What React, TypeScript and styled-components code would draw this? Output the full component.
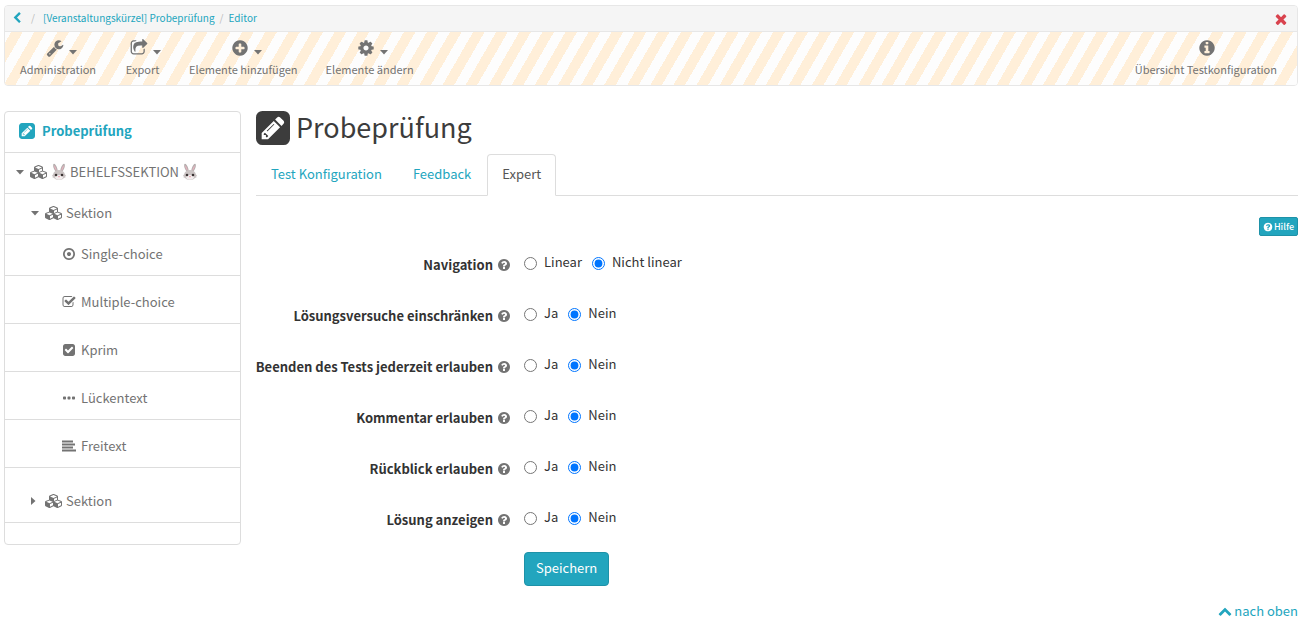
import React from "react";
import styled, { createGlobalStyle, css } from "styled-components";

const teal = "#22a5be";
const grey = "#737373";
const dark = "#333";
const line = "#ddd";
const small = 11;
const base = 13;

const GlobalStyle = createGlobalStyle`
  *, *::before, *::after { box-sizing: border-box; }
  body {
    margin: 0;
    background: #fff;
    color: ${dark};
    font-family: "Noto Sans CJK SC", "Open Sans", sans-serif;
    font-size: ${base}px;
    line-height: 20px;
  }
  a { color: ${teal}; text-decoration: none; }
  button, input { font: inherit; }
`;

/* ---------- icons ---------- */

const Svg = styled.svg<{ $size: number }>`
  height: ${(p) => p.$size}px;
  width: auto;
  flex: none;
  display: block;
  fill: currentColor;
`;

const disc =
  "M1664 896q0 209-103 385.5t-279.5 279.5-385.5 103-385.5-103-279.5-279.5-103-385.5 103-385.5 279.5-279.5 385.5-103 385.5 103 279.5 279.5 103 385.5z";

const shapes = {
  wrench:
    "M448 1472q0-26-19-45t-45-19-45 19-19 45 19 45 45 19 45-19 19-45zm644-420l-682 682q-37 37-90 37-52 0-91-37l-106-108q-38-36-38-90 0-53 38-91l681-681q39 98 114.5 173.5t173.5 114.5zm634-435q0 39-23 106-47 134-164.5 217.5t-258.5 83.5q-185 0-316.5-131.5t-131.5-316.5 131.5-316.5 316.5-131.5q58 0 121.5 16.5t107.5 46.5q16 11 16 28t-16 28l-293 169v224l193 107q5-3 79-48.5t135.5-81 70.5-35.5q15 0 23.5 10t8.5 25z",
  share:
    "M1472 989v259q0 119-84.5 203.5t-203.5 84.5h-832q-119 0-203.5-84.5t-84.5-203.5v-832q0-119 84.5-203.5t203.5-84.5h255q13 0 22.5 9.5t9.5 22.5q0 27-26 32-77 26-133 60-10 4-16 4h-112q-66 0-113 47t-47 113v832q0 66 47 113t113 47h832q66 0 113-47t47-113v-214q0-19 18-29 28-13 54-37 16-16 35-8 21 9 21 29zm237-496l-384 384q-18 19-45 19-12 0-25-5-39-17-39-59v-192h-160q-323 0-438 131-119 137-74 473 3 23-20 34-8 2-12 2-16 0-26-13-10-14-21-31t-39.5-68.5-49.5-99.5-38.5-114-17.5-122q0-49 3.5-91t14-90 28-88 47-81.5 68.5-74 94.5-61.5 124.5-48.5 159.5-30.5 196.5-11h160v-192q0-42 39-59 13-5 25-5 26 0 45 19l384 384q19 19 19 45t-19 45z",
  plus:
    "M1344 960v-128q0-26-19-45t-45-19h-256v-256q0-26-19-45t-45-19h-128q-26 0-45 19t-19 45v256h-256q-26 0-45 19t-19 45v128q0 26 19 45t45 19h256v256q0 26 19 45t45 19h128q26 0 45-19t19-45v-256h256q26 0 45-19t19-45z" +
    disc,
  cog: "M1152 896q0-106-75-181t-181-75-181 75-75 181 75 181 181 75 181-75 75-181zm512-109v222q0 12-8 23t-20 13l-185 28q-19 54-39 91 35 50 107 138 10 12 10 25t-9 23q-27 37-99 108t-94 71q-12 0-26-9l-138-108q-44 23-91 38-16 136-29 186-7 28-36 28h-222q-14 0-24.5-8.5t-11.5-21.5l-28-184q-49-16-90-37l-141 107q-10 9-25 9-14 0-25-11-126-114-165-168-7-10-7-23 0-12 8-23 15-21 51-66.5t54-70.5q-27-50-41-99l-183-27q-13-2-21-12.5t-8-23.5v-222q0-12 8-23t19-13l186-28q14-46 39-92-40-57-107-138-10-12-10-24 0-10 9-23 26-36 98.5-107.5t94.5-71.5q13 0 26 10l138 107q44-23 91-38 16-136 29-186 7-28 36-28h222q14 0 24.5 8.5t11.5 21.5l28 184q49 16 90 37l142-107q9-9 24-9 13 0 25 10 129 119 165 170 7 8 7 22 0 12-8 23-15 21-51 66.5t-54 70.5q26 50 41 98l183 28q13 2 21 12.5t8 23.5z",
  info:
    "M1152 1376v-160q0-14-9-23t-23-9h-96v-512q0-14-9-23t-23-9h-320q-14 0-23 9t-9 23v160q0 14 9 23t23 9h96v320h-96q-14 0-23 9t-9 23v160q0 14 9 23t23 9h448q14 0 23-9t9-23zm-128-896v-160q0-14-9-23t-23-9h-192q-14 0-23 9t-9 23v160q0 14 9 23t23 9h192q14 0 23-9t9-23z" +
    disc,
  question:
    "M1024 1376v-192q0-14-9-23t-23-9h-192q-14 0-23 9t-9 23v192q0 14 9 23t23 9h192q14 0 23-9t9-23zm256-672q0-88-55.5-163t-138.5-116-170-41q-243 0-371 213-15 24 8 42l132 100q7 6 19 6 16 0 25-12 53-68 86-92 34-24 86-24 48 0 85.5 26t37.5 59q0 38-20 61t-68 45q-63 28-115.5 86.5t-52.5 125.5v36q0 14 9 23t23 9h192q14 0 23-9t9-23q0-19 21.5-49.5t54.5-49.5q32-18 49-28.5t46-35 44.5-48 28-60.5 12.5-81z" +
    disc,
  times:
    "M1490 1322q0 40-28 68l-136 136q-28 28-68 28t-68-28l-294-294-294 294q-28 28-68 28t-68-28l-136-136q-28-28-28-68t28-68l294-294-294-294q-28-28-28-68t28-68l136-136q28-28 68-28t68 28l294 294 294-294q28-28 68-28t68 28l136 136q28 28 28 68t-28 68l-294 294 294 294q28 28 28 68z",
  left: "M1427 301l-531 531 531 531q19 19 19 45t-19 45l-166 166q-19 19-45 19t-45-19l-742-742q-19-19-19-45t19-45l742-742q19-19 45-19t45 19l166 166q19 19 19 45t-19 45z",
  up: "M1683 1331l-166 165q-19 19-45 19t-45-19l-531-531-531 531q-19 19-45 19t-45-19l-166-165q-19-19-19-45.5t19-45.5l742-741q19-19 45-19t45 19l742 741q19 19 19 45.5t-19 45.5z",
  dot:
    "M1152 896q0 106-75 181t-181 75-181-75-75-181 75-181 181-75 181 75 75 181zM896 352q-148 0-273 73t-198 198-73 273 73 273 198 198 273 73 273-73 198-198 73-273-73-273-198-198-273-73z" +
    disc,
  checkO:
    "M1472 930v318q0 119-84.5 203.5t-203.5 84.5h-832q-119 0-203.5-84.5t-84.5-203.5v-832q0-119 84.5-203.5t203.5-84.5h832q63 0 117 25 15 7 18 23 3 17-9 29l-49 49q-10 10-23 10-3 0-9-2-23-6-45-6h-832q-66 0-113 47t-47 113v832q0 66 47 113t113 47h832q66 0 113-47t47-113v-254q0-13 9-22l64-64q10-10 23-10 6 0 12 3 20 8 20 29zm231-489l-814 814q-24 24-57 24t-57-24l-430-430q-24-24-24-57t24-57l110-110q24-24 57-24t57 24l263 263 647-647q24-24 57-24t57 24l110 110q24 24 24 57t-24 57z",
  check:
    "M813 1299l614-614q19-19 19-45t-19-45l-102-102q-19-19-45-19t-45 19l-467 467-211-211q-19-19-45-19t-45 19l-102 102q-19 19-19 45t19 45l358 358q19 19 45 19t45-19zm851-883v960q0 119-84.5 203.5t-203.5 84.5h-960q-119 0-203.5-84.5t-84.5-203.5v-960q0-119 84.5-203.5t203.5-84.5h960q119 0 203.5 84.5t84.5 203.5z",
  dots:
    "M224 704h192q96 0 96 96v192q0 96-96 96h-192q-96 0-96-96v-192q0-96 96-96zM800 704h192q96 0 96 96v192q0 96-96 96h-192q-96 0-96-96v-192q0-96 96-96zM1376 704h192q96 0 96 96v192q0 96-96 96h-192q-96 0-96-96v-192q0-96 96-96z",
  lines:
    "M0 192h1408v256H0zM0 576h1664v256H0zM0 960h1408v256H0zM0 1344h1792v256H0z",
};

type IconName = keyof typeof shapes;

const Icon = ({ name, size = 14 }: { name: IconName; size?: number }) => (
  <Svg $size={size} viewBox="0 0 1792 1792" aria-hidden="true">
    <path fillRule="evenodd" d={shapes[name]} />
  </Svg>
);

const Cubes = () => (
  <Svg $size={14} viewBox="0 0 2304 1792" aria-hidden="true">
    <path d="M640 1632l384-192v-314l-384 164v342zm-64-454l404-173-404-173-404 173zm1088 454l384-192v-314l-384 164v342zm-64-454l404-173-404-173-404 173zm-448-293l384-165v-266l-384 164v267zm-64-379l441-189-441-189-441 189zm1088 518v416q0 36-19 67t-52 47l-448 224q-25 14-57 14t-57-14l-448-224q-4-2-7-4-2 2-7 4l-448 224q-25 14-57 14t-57-14l-448-224q-33-16-52-47t-19-67v-416q0-38 21.5-70t56.5-48l434-186v-400q0-38 21.5-70t56.5-48l448-192q23-10 50-10t50 10l448 192q35 16 56.5 48t21.5 70v400l434 186q36 16 57 48t21 70z" />
  </Svg>
);

const PencilSquare = ({ size }: { size: number }) => (
  <Svg $size={size} viewBox="0 -1408 1536 1536" aria-hidden="true">
    <path
      transform="scale(1 -1)"
      fillRule="evenodd"
      d="M404 428l152 -152l-52 -52h-56v96h-96v56zM818 818q14 -13 -3 -30l-291 -291q-17 -17 -30 -3q-14 13 3 30l291 291q17 17 30 3zM544 128l544 544l-288 288l-544 -544v-288h288zM1152 736l92 92q28 28 28 68t-28 68l-152 152q-28 28 -68 28t-68 -28l-92 -92zM1536 1120v-960q0 -119 -84.5 -203.5t-203.5 -84.5h-960q-119 0 -203.5 84.5t-84.5 203.5v960q0 119 84.5 203.5t203.5 84.5h960q119 0 203.5 -84.5t84.5 -203.5z"
    />
  </Svg>
);

const CaretDown = () => (
  <Svg $size={5} viewBox="0 0 8 5" aria-hidden="true">
    <path d="M0 0h8L4 4.5z" />
  </Svg>
);

const CaretRight = () => (
  <Svg $size={8} viewBox="0 0 8 8" aria-hidden="true">
    <path d="M0 0v8l4.500-4z" />
  </Svg>
);

const Rabbit = () => (
  <Svg $size={18} viewBox="0 0 16 18" role="img" aria-label="Hase">
    <path fill="#b5aeae" d="M5 9C2.800 6.500 1.800 3.500 2.200 1.500 2.600.4 3.800.8 4.800 2.300 5.900 4 6.600 6 6.800 8zM11 9c2.200-2.500 3.200-5.500 2.800-7.500-.4-1.100-1.600-.7-2.600.8C10.100 4 9.400 6 9.200 8z" />
    <path fill="#e6b3be" d="M5 7.500C3.700 5.600 3 3.700 3.100 2.300c1 .6 2.100 2.700 2.600 4.900zM11 7.500c1.300-1.900 2-3.800 1.900-5.200-1 .6-2.100 2.700-2.600 4.900z" />
    <path fill="#cbc4c4" d="M8 7c3.200 0 5.300 1.600 5.900 4.300l1.200 1.700-1 .4.300 1.300-1.300.1C12 16.300 10.200 17 8 17s-4-.7-5.100-2.200l-1.300-.1.300-1.300-1-.4 1.200-1.700C2.700 8.600 4.800 7 8 7z" />
    <ellipse cx="8" cy="14.300" rx="3.800" ry="2.400" fill="#f3eeee" />
    <circle cx="5" cy="12" r="1.300" fill="#3a3232" />
    <circle cx="11" cy="12" r="1.300" fill="#3a3232" />
    <path fill="#e0788c" d="M7 13.200h2l-1 1.300z" />
  </Svg>
);

/* ---------- layout ---------- */

const Page = styled.div`
  padding: 5px 3px 16px 4px;
`;

const Header = styled.header`
  border: 1px solid #e7e7e7;
  border-radius: 4px;
  overflow: hidden;
`;

const Breadcrumb = styled.nav`
  display: flex;
  align-items: center;
  height: 26px;
  padding: 0 8px 2px 6px;
  background: #f5f5f5;
  border-bottom: 1px solid #e7e7e7;
  font-size: 10px;
`;

const BackLink = styled.a`
  display: flex;
`;

const Separator = styled.span`
  width: 20px;
  text-align: center;
  color: #bbb;
`;

const CrumbSeparator = styled(Separator)`
  width: 14px;
`;

const CloseButton = styled.button`
  margin: 2px 0 0 auto;
  padding: 0;
  border: 0;
  background: none;
  color: #d9434e;
`;

const Toolbar = styled.div`
  display: flex;
  height: 53px;
  padding: 0 20px 0 15px;
  gap: 28px;
  background: repeating-linear-gradient(-60deg, #fdfdfd 0 10px, #ffefd9 10px 20px);
`;

const Tool = styled.button<{ $end?: boolean }>`
  display: flex;
  flex-direction: column;
  align-items: center;
  padding: 6px 0 0;
  border: 0;
  background: none;
  color: ${grey};
  font-size: ${small}px;
  line-height: 16px;
  white-space: nowrap;
  ${(p) => p.$end && css`margin-left: auto;`}
`;

const ToolIcons = styled.span<{ $menu?: boolean }>`
  display: flex;
  align-items: center;
  gap: 5px;
  height: 20px;
  margin-bottom: 3px;
  padding-left: ${(p) => (p.$menu ? 6 : 2)}px;

  svg + svg { margin-top: 8px; }
`;

const Columns = styled.div`
  display: flex;
  align-items: flex-start;
  gap: 15px;
  margin-top: 25px;
`;

const Sidebar = styled.nav`
  flex: 0 0 237px;
  padding-bottom: 21px;
  border: 1px solid ${line};
  border-radius: 4px;
`;

const TreeRow = styled.a<{ $level: number; $space?: number }>`
  display: flex;
  align-items: center;
  gap: ${(p) => [7, 3, 3, 5][p.$level]}px;
  height: ${(p) => 41 + (p.$space ?? 0)}px;
  padding-top: ${(p) => p.$space ?? 0}px;
  padding-bottom: 2px;
  padding-left: ${(p) => [14, 11, 26, 57][p.$level]}px;
  border-bottom: 1px solid ${line};
  color: ${grey};
  white-space: nowrap;
  ${(p) => p.$level === 0 && css`color: ${teal}; font-weight: 700;`}
`;

const Marker = styled.span`
  display: flex;
  justify-content: center;
  width: 8px;
  margin-right: 3px;
`;

const Main = styled.main`
  flex: 1;
  min-width: 0;
`;

const Title = styled.h1`
  display: flex;
  align-items: flex-start;
  gap: 6px;
  height: 34px;
  margin: 0 0 9px;
  color: #3c3c3c;
  font-size: 27px;
  font-weight: 400;
  line-height: 32px;
`;

const Tabs = styled.nav`
  display: flex;
  gap: 1px;
  border-bottom: 1px solid ${line};
`;

const Tab = styled.a<{ $active?: boolean }>`
  height: 42px;
  margin-bottom: -1px;
  padding: 9px 14px;
  border: 1px solid transparent;
  border-radius: 4px 4px 0 0;
  ${(p) =>
    p.$active &&
    css`
      border-color: ${line};
      border-bottom-color: #fff;
      background: #fff;
      color: #555;
    `}
`;

const HelpRow = styled.div`
  display: flex;
  justify-content: flex-end;
  margin: 21px 0 10px;
`;

const HelpButton = styled.button`
  display: flex;
  align-items: center;
  gap: 1px;
  height: 19px;
  padding: 0 3px;
  border: 1px solid #1e92a8;
  border-radius: 2px;
  background: ${teal};
  color: #fff;
  font-size: 9px;
  font-weight: 500;
`;

const Form = styled.form`
  margin: 0 -15px;
`;

const Field = styled.div`
  display: grid;
  grid-template-columns: 1fr 3fr;
  margin-bottom: 17px;
`;

const FieldLabel = styled.div`
  display: flex;
  align-items: center;
  justify-content: flex-end;
  gap: 4px;
  height: 34px;
  padding-top: 4px;
  font-weight: 700;
  white-space: nowrap;

  svg {
    margin-right: -2px;
    color: ${grey};
  }
`;

const Options = styled.div`
  display: flex;
  gap: 10px;
  height: 32px;
  padding-left: 15px;
`;

const Option = styled.label`
  display: flex;
  align-items: center;
  gap: 7px;
`;

const Radio = styled.input`
  width: 13px;
  height: 13px;
  margin: 2px 0 0;
`;

const Actions = styled.div`
  display: grid;
  grid-template-columns: 1fr 3fr;
`;

const SaveButton = styled.button`
  grid-column: 2;
  justify-self: start;
  height: 34px;
  margin-left: 15px;
  padding: 0 11px 2px;
  border: 1px solid #1e92a8;
  border-radius: 4px;
  background: ${teal};
  color: #fff;
`;

const Footer = styled.footer`
  display: flex;
  justify-content: flex-end;
  margin-top: 15px;
`;

const TopLink = styled.a`
  display: flex;
  align-items: center;
  gap: 2px;
`;

/* ---------- data ---------- */

const tools: { icon: IconName; label: string }[] = [
  { icon: "wrench", label: "Administration" },
  { icon: "share", label: "Export" },
  { icon: "plus", label: "Elemente hinzufügen" },
  { icon: "cog", label: "Elemente ändern" },
];

const questions: { icon: IconName; label: string; space: number }[] = [
  { icon: "dot", label: "Single-choice", space: 0 },
  { icon: "checkO", label: "Multiple-choice", space: 7 },
  { icon: "check", label: "Kprim", space: 7 },
  { icon: "dots", label: "Lückentext", space: 7 },
  { icon: "lines", label: "Freitext", space: 7 },
];

const fields = [
  { id: "navigation", label: "Navigation", options: ["Linear", "Nicht linear"] },
  { id: "attempts", label: "Lösungsversuche einschränken", options: ["Ja", "Nein"] },
  { id: "cancel", label: "Beenden des Tests jederzeit erlauben", options: ["Ja", "Nein"] },
  { id: "comment", label: "Kommentar erlauben", options: ["Ja", "Nein"] },
  { id: "review", label: "Rückblick erlauben", options: ["Ja", "Nein"] },
  { id: "solution", label: "Lösung anzeigen", options: ["Ja", "Nein"] },
];

export default function App() {
  return (
    <>
      <GlobalStyle />
      <Page>
        <Header>
          <Breadcrumb>
            <BackLink href="#" aria-label="Zurück">
              <Icon name="left" size={12} />
            </BackLink>
            <Separator>/</Separator>
            <a href="#">[Veranstaltungskürzel] Probeprüfung</a>
            <CrumbSeparator>/</CrumbSeparator>
            <a href="#">Editor</a>
            <CloseButton type="button" aria-label="Schliessen">
              <Icon name="times" size={16} />
            </CloseButton>
          </Breadcrumb>
          <Toolbar>
            {tools.map((t) => (
              <Tool key={t.label} type="button">
                <ToolIcons $menu>
                  <Icon name={t.icon} size={18} />
                  <CaretDown />
                </ToolIcons>
                {t.label}
              </Tool>
            ))}
            <Tool type="button" $end>
              <ToolIcons>
                <Icon name="info" size={18} />
              </ToolIcons>
              Übersicht Testkonfiguration
            </Tool>
          </Toolbar>
        </Header>

        <Columns>
          <Sidebar>
            <TreeRow href="#" $level={0}>
              <PencilSquare size={16} />
              Probeprüfung
            </TreeRow>
            <TreeRow href="#" $level={1}>
              <Marker><CaretDown /></Marker>
              <Cubes />
              <Rabbit />
              BEHELFSSEKTION
              <Rabbit />
            </TreeRow>
            <TreeRow href="#" $level={2}>
              <Marker><CaretDown /></Marker>
              <Cubes />
              Sektion
            </TreeRow>
            {questions.map((q) => (
              <TreeRow key={q.label} href="#" $level={3} $space={q.space}>
                <Icon name={q.icon} />
                {q.label}
              </TreeRow>
            ))}
            <TreeRow href="#" $level={2} $space={14}>
              <Marker><CaretRight /></Marker>
              <Cubes />
              Sektion
            </TreeRow>
          </Sidebar>

          <Main>
            <Title>
              <PencilSquare size={34} />
              Probeprüfung
            </Title>
            <Tabs>
              <Tab href="#">Test Konfiguration</Tab>
              <Tab href="#">Feedback</Tab>
              <Tab href="#" $active>Expert</Tab>
            </Tabs>
            <HelpRow>
              <HelpButton type="button">
                <Icon name="question" size={10} />
                Hilfe
              </HelpButton>
            </HelpRow>
            <Form onSubmit={(e) => e.preventDefault()}>
              {fields.map((f) => (
                <Field key={f.id} role="radiogroup" aria-labelledby={f.id}>
                  <FieldLabel>
                    <span id={f.id}>{f.label}</span>
                    <Icon name="question" />
                  </FieldLabel>
                  <Options>
                    {f.options.map((o, i) => (
                      <Option key={o}>
                        <Radio type="radio" name={f.id} defaultChecked={i === 1} />
                        {o}
                      </Option>
                    ))}
                  </Options>
                </Field>
              ))}
              <Actions>
                <SaveButton type="submit">Speichern</SaveButton>
              </Actions>
            </Form>
            <Footer>
              <TopLink href="#">
                <Icon name="up" />
                nach oben
              </TopLink>
            </Footer>
          </Main>
        </Columns>
      </Page>
    </>
  );
}
